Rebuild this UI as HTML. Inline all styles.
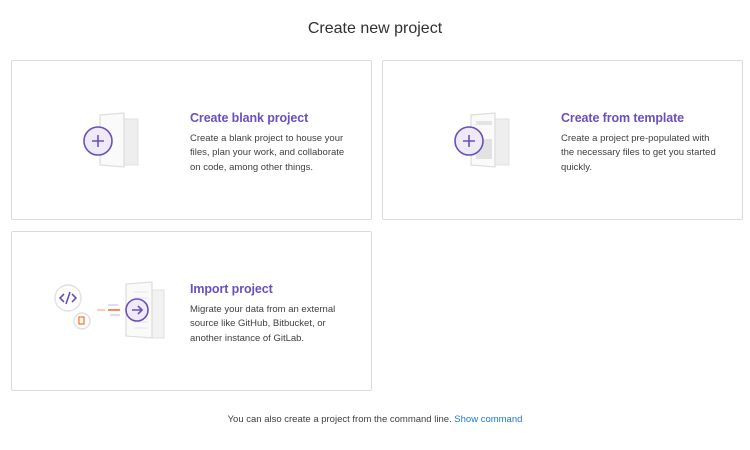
<!DOCTYPE html>
<html><head><style>
body{margin:0;width:750px;height:450px;background:#fff;font-family:"Liberation Sans",sans-serif;color:#2e2e2e;position:relative;overflow:hidden}
h1{position:absolute;top:20px;left:0;width:750px;text-align:center;font-size:16px;font-weight:normal;margin:0;color:#303030}
.card{position:absolute;border:1px solid #dbdbdb;border-radius:2px;width:361px;height:160px;box-sizing:border-box}
.t{position:absolute;left:178px;top:50px;font-size:12.5px;color:#6b4fbb;font-weight:bold;letter-spacing:-.1px}
.d{position:absolute;left:178px;top:71px;font-size:9.5px;line-height:14.3px;color:#404040;width:158px}
.f{position:absolute;top:414px;left:0;width:750px;text-align:center;font-size:9.5px;color:#404040}
.f a{color:#1f78d1;text-decoration:none}
svg{position:absolute}
</style></head><body>
<h1>Create new project</h1>
<div class="card" style="left:11px;top:60px">
<svg style="left:60px;top:50px" width="80" height="60" viewBox="0 0 80 60">
<rect x="52" y="8" width="14" height="46" fill="#eee" stroke="#e0e0e0"/>
<path d="M28 4 L52 2 L52 56 L28 54 Z" fill="#fafafa" stroke="#ddd" stroke-width="1.2"/>
<circle cx="26" cy="30" r="14" fill="#eeeaf8" stroke="#6b4fbb" stroke-width="1.6"/>
<path d="M26 24v12M20 30h12" stroke="#6b4fbb" stroke-width="1.6"/>
</svg>
<div class="t">Create blank project</div>
<div class="d">Create a blank project to house your files, plan your work, and collaborate on code, among other things.</div>
</div>
<div class="card" style="left:382px;top:60px">
<svg style="left:60px;top:50px" width="80" height="60" viewBox="0 0 80 60">
<rect x="52" y="8" width="14" height="46" fill="#eee" stroke="#e0e0e0"/>
<path d="M28 4 L52 2 L52 56 L28 54 Z" fill="#fafafa" stroke="#ddd" stroke-width="1.2"/>
<rect x="33" y="10" width="16" height="4" fill="#e4e4e4"/>
<rect x="33" y="28" width="16" height="20" fill="#e2e2e2"/>
<circle cx="26" cy="30" r="14" fill="#eeeaf8" stroke="#6b4fbb" stroke-width="1.6"/>
<path d="M26 24v12M20 30h12" stroke="#6b4fbb" stroke-width="1.6"/>
</svg>
<div class="t">Create from template</div>
<div class="d">Create a project pre-populated with the necessary files to get you started quickly.</div>
</div>
<div class="card" style="left:11px;top:231px">
<svg style="left:38px;top:48px" width="120" height="65" viewBox="0 0 120 65">
<rect x="100" y="10" width="14" height="48" fill="#f2f2f2" stroke="#e0e0e0"/>
<path d="M76 4 L102 2 L102 58 L76 56 Z" fill="#fafafa" stroke="#ddd" stroke-width="1.2"/>
<path d="M84 12h14M84 18h14M84 24h14M84 30h14M84 36h14M84 42h14M84 48h14" stroke="#e6e6e6"/>
<circle cx="18" cy="18" r="13" fill="#fff" stroke="#e0e0e0" stroke-width="1.4"/>
<path d="M14 14l-4 4 4 4M22 14l4 4-4 4M20 12l-4 12" stroke="#6b4fbb" stroke-width="1.6" fill="none"/>
<circle cx="32" cy="41" r="8" fill="#fff" stroke="#e0e0e0" stroke-width="1.4"/>
<rect x="29" y="37" width="5" height="7" fill="none" stroke="#fc6d26" stroke-width="1.2"/>
<path d="M47 30h8" stroke="#fcc4a5" stroke-width="1.6"/>
<path d="M58 30h12" stroke="#fc6d26" stroke-width="1.6"/>
<path d="M58 25h10M60 35h10" stroke="#d6cdf0" stroke-width="1.4"/>
<circle cx="87" cy="30" r="11" fill="#eeeaf8" stroke="#6b4fbb" stroke-width="1.6"/>
<path d="M82 30h10M88 26l4 4-4 4" stroke="#6b4fbb" stroke-width="1.6" fill="none"/>
</svg>
<div class="t">Import project</div>
<div class="d">Migrate your data from an external source like GitHub, Bitbucket, or another instance of GitLab.</div>
</div>
<div class="f">You can also create a project from the command line. <a>Show command</a></div>
</body></html>
